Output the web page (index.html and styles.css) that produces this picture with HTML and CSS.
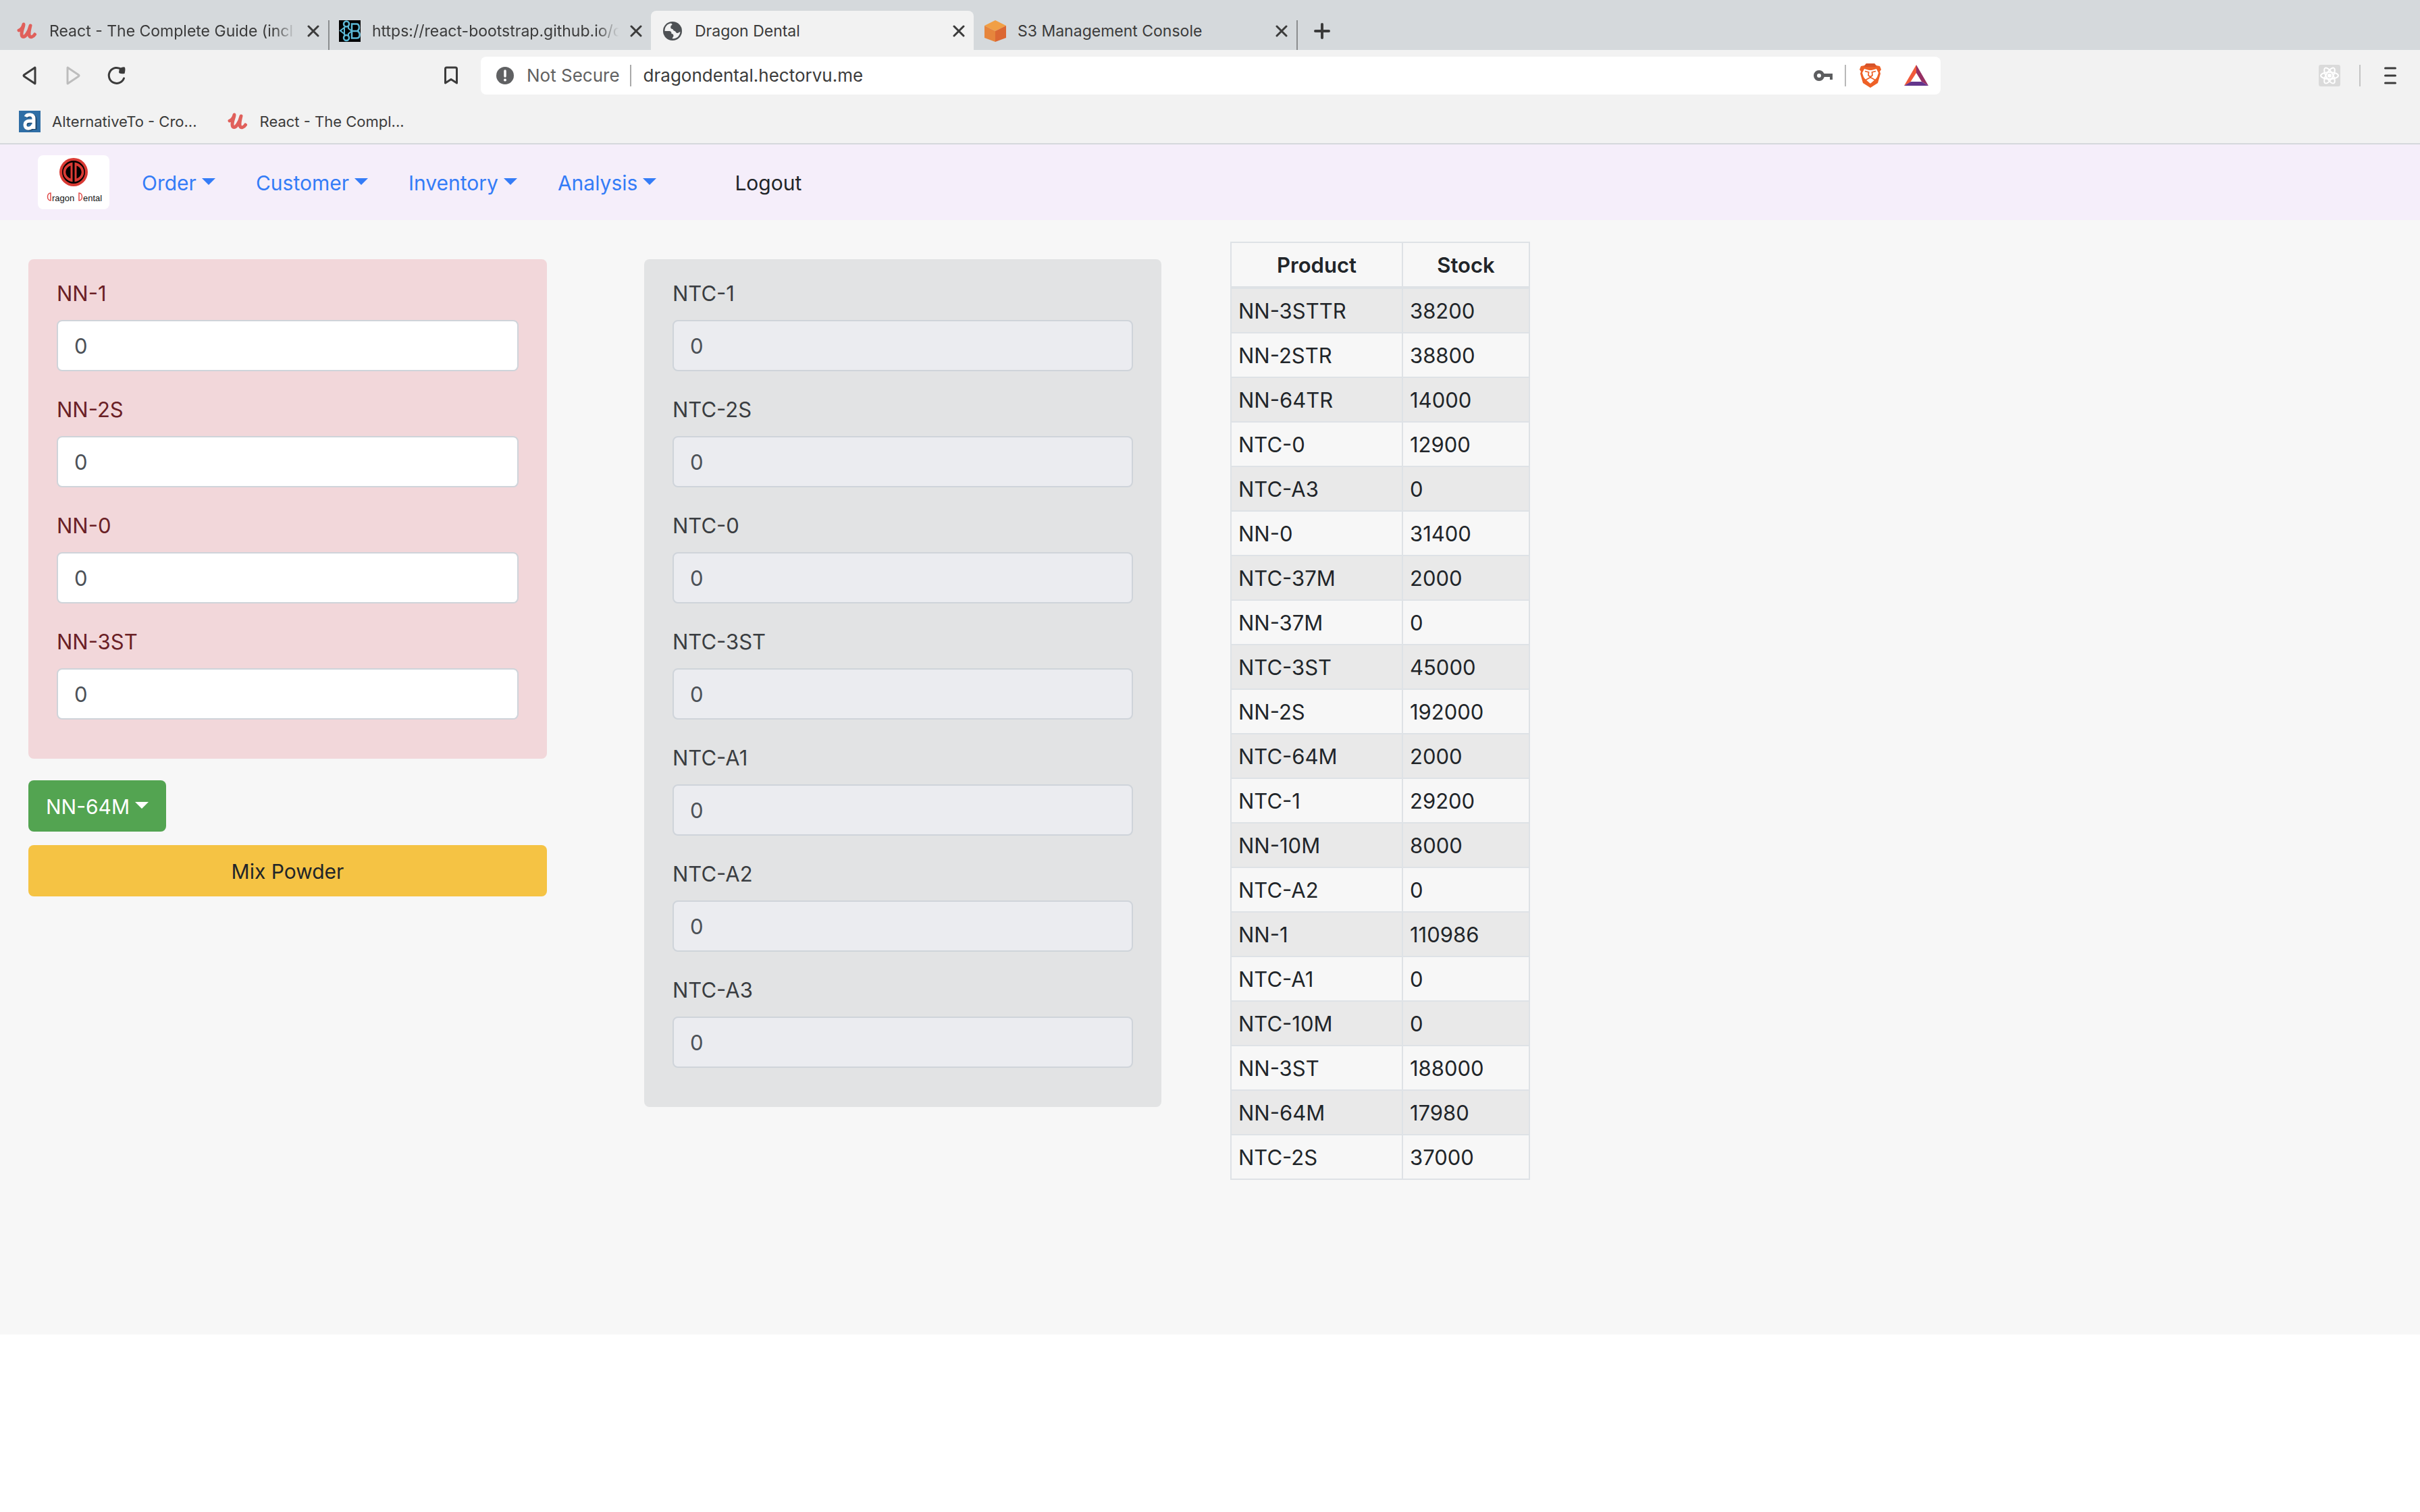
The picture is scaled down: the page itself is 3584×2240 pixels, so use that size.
FILE: index.html
```html
<!DOCTYPE html>
<html lang="en">
<head>
<meta charset="utf-8">
<title>Dragon Dental</title>
<link rel="stylesheet" href="styles.css">
</head>
<body>
<svg class="sprite" aria-hidden="true">
  <symbol id="i-close" viewBox="0 0 18 18"><path d="M2 2l14 14M16 2L2 16" fill="none" stroke="currentColor" stroke-width="3" stroke-linecap="round"/></symbol>
  <symbol id="i-udemy" viewBox="0 0 32 32"><path d="M4 15c3-1 6-5 7-9 1 1-3 8-3 14s4 6 8 0c2-3 4-8 5-12-1 4-3 12-1.500 15 1.500 3 5.500 2 8-2" fill="none" stroke="#e0605b" stroke-width="5" stroke-linecap="round" stroke-linejoin="round"/></symbol>
</svg>

<header class="browser">
  <div class="tabs">
    <div class="tab tab-split">
      <svg class="icon"><use href="#i-udemy"/></svg>
      <span class="tab-title fade">React - The Complete Guide (incl H</span>
      <button class="close" aria-label="Close tab"><svg><use href="#i-close"/></svg></button>
    </div>
    <div class="tab">
      <svg class="icon" viewBox="0 0 32 32"><rect width="32" height="32" fill="#020203"/><g fill="none" stroke="#5cb9d6" stroke-width="2.500"><path d="M19 5.500v21h7c6 0 6-9 1-10.500 4-1.500 4-10.500-1-10.500zM19 16h8"/><circle cx="11" cy="5.500" r="4"/><circle cx="11" cy="26" r="4"/><path d="M9 10L2 15.500 9 21M8 10v12M14 8v4l5 4-5 4v4" stroke-width="2"/></g></svg>
      <span class="tab-title fade">https://react-bootstrap.github.io/c</span>
      <button class="close" aria-label="Close tab"><svg><use href="#i-close"/></svg></button>
    </div>
    <div class="tab tab-active">
      <svg class="icon" viewBox="0 0 32 32"><circle cx="16" cy="16" r="14" fill="#4e5154"/><path d="M14 4.500c-6 1-9.500 5-9.500 11.500h6c3 0 4 1 4 4 2 0 3 1 3 3.500l-2 3.500c5 1 11-2 12-10l-2 1c-2 2-4 1-5-1s-4-1-4-4c-2 0-4-1-3-4 0-2 2-1 2-3z" fill="#f2f2f2"/></svg>
      <span class="tab-title">Dragon Dental</span>
      <button class="close" aria-label="Close tab"><svg><use href="#i-close"/></svg></button>
    </div>
    <div class="tab tab-split">
      <svg class="icon" viewBox="0 0 32 32"><path d="M16 0l16 8-16 8L0 8z" fill="#f19f45"/><path d="M0 8l16 8v16L0 26z" fill="#e6853c"/><path d="M32 8l-16 8v16l16-6z" fill="#db6733"/></svg>
      <span class="tab-title">S3 Management Console</span>
      <button class="close" aria-label="Close tab"><svg><use href="#i-close"/></svg></button>
    </div>
    <button class="new-tab" aria-label="New tab"><svg viewBox="0 0 24 24"><path d="M12 2v20M2 12h20" stroke="currentColor" stroke-width="4" stroke-linecap="round"/></svg></button>
  </div>

  <div class="toolbar">
    <div class="history">
      <button aria-label="Back"><svg viewBox="0 0 32 32"><path d="M24 4.500v23q0 .8-.8 0L7.500 17q-1-1 0-2L23.200 4.500q.8-.8.8 0z" fill="none" stroke="currentColor" stroke-width="3" stroke-linejoin="round"/></svg></button>
      <button class="off" aria-label="Forward" disabled><svg viewBox="0 0 32 32"><path d="M8 4.500v23q0 .8.800 0L24.500 17q1-1 0-2L8.800 4.500q-.8-.8-.8 0z" fill="none" stroke="currentColor" stroke-width="3" stroke-linejoin="round"/></svg></button>
      <button aria-label="Reload"><svg viewBox="0 0 32 32"><path d="M24 7A11.500 11.500 0 1 0 27.500 20" fill="none" stroke="currentColor" stroke-width="3" stroke-linecap="round"/><path d="M21 5q7-3 8-1 1 3-.5 9-8 1-8.500-2z" fill="currentColor"/></svg></button>
    </div>
    <button class="bookmark" aria-label="Bookmark this page"><svg viewBox="0 0 32 32"><path d="M7.500 6q0-2 2-2h13q2 0 2 2v21l-8.500-5.500L7.500 27z" fill="none" stroke="currentColor" stroke-width="3" stroke-linejoin="round"/></svg></button>
    <div class="address">
      <svg class="icon" viewBox="0 0 32 32"><circle cx="16" cy="16" r="13" fill="#606163"/><path d="M16 9v8" stroke="#fff" stroke-width="3.500" stroke-linecap="round"/><circle cx="16" cy="22.500" r="2" fill="#fff"/></svg>
      <span class="insecure">Not Secure</span>
      <input class="url" aria-label="Address" value="dragondental.hectorvu.me">
      <svg class="icon" viewBox="0 0 32 32"><circle cx="10" cy="16" r="5.500" fill="none" stroke="#5c5d5f" stroke-width="5"/><path d="M15 13h15v9h-4v-4H15z" fill="#5c5d5f"/></svg>
      <button class="shield" aria-label="Brave Shields"><svg viewBox="0 0 32 36"><path d="M10 0h12l3 3 5 1 2 5-2 3 1 3-4 14-11 7-11-7L1 15l1-3-2-3 2-5 5-1z" fill="#ee6127"/><path d="M10 0h12l3 5H7z" fill="#d5532a"/><path d="M7 8l7 2h4l7-2 3 6-2 6-3 5-7 5-7-5-3-5-2-6z" fill="#fff"/><path d="M8 11.500l5.500 1.500-.500 4.500 3 2.500 3-2.500-.5-4.500 5.500-1.500M9 24.500l7-4 7 4" fill="none" stroke="#ee6127" stroke-width="1.800"/><path d="M6 21l5 4.500 5 4.500 5-4.500 5-4.500-2 8-8 4-8-4z" fill="#ee6127"/><path d="M12 25l4-2 4 2-4 3z" fill="#fff"/></svg></button>
      <button class="rewards" aria-label="Brave Rewards"><svg viewBox="0 0 36 32"><path d="M18 0v12L9 26l-9 5z" fill="#f15a3a"/><path d="M18 0l18 31-10-6-8-13z" fill="#962f63"/><path d="M0 31l10-6h16l10 6z" fill="#64358c"/></svg></button>
    </div>
    <div class="extras">
      <button aria-label="React Developer Tools"><svg viewBox="0 0 32 32"><rect width="32" height="32" rx="3" fill="#dadada"/><g fill="none" stroke="#fff" stroke-width="2"><ellipse cx="16" cy="16" rx="13" ry="5"/><ellipse cx="16" cy="16" rx="13" ry="5" transform="rotate(60 16 16)"/><ellipse cx="16" cy="16" rx="13" ry="5" transform="rotate(120 16 16)"/></g><circle cx="16" cy="16" r="3" fill="#fff"/></svg></button>
      <button class="menu" aria-label="Menu"><svg viewBox="0 0 32 32"><path d="M8.500 5h15M8.500 16h15M8.500 27h15" stroke="currentColor" stroke-width="3" stroke-linecap="round"/></svg></button>
    </div>
  </div>

  <nav class="bookmarks" aria-label="Bookmarks">
    <a href="#"><svg class="icon" viewBox="0 0 32 32"><rect width="32" height="32" fill="#2f6ea5"/><path d="M10 9c2-4 13-5 13 3v15M22 15c-7 0-13 0-13 6 0 7 10 7 13 0" fill="none" stroke="#1d4468" stroke-width="5" transform="translate(1 1)"/><path d="M10 9c2-4 12-5 12 3v15M21 15c-7 0-12 0-12 6 0 7 9 7 12 0" fill="none" stroke="#fff" stroke-width="5"/></svg>AlternativeTo - Cro...</a>
    <a href="#"><svg class="icon"><use href="#i-udemy"/></svg>React - The Compl...</a>
  </nav>
</header>

<div class="app">
  <nav class="navbar" aria-label="Main">
    <a class="brand" href="#" aria-label="Dragon Dental">
      <svg viewBox="0 0 106 80">
        <circle cx="53" cy="25" r="21" fill="#d93a34"/><circle cx="53" cy="25" r="17" fill="#000"/>
        <path d="M51.500 10.500v29C33 36 33 14 51.500 10.500zM54.500 10.500v29C73 36 73 14 54.500 10.500z" fill="#d93a34"/>
        <path d="M48.500 15.500v19C39 31 39 19 48.500 15.500zM57.500 15.500v19C67 31 67 19 57.500 15.500z" fill="#000"/>
        <path d="M19 56v11c-6 0-6-11 0-11zM61 56v11c6 0 6-11 0-11z" fill="none" stroke="#e04a48" stroke-width="1.500"/>
        <text x="21" y="68" class="brand-text">ragon</text><text x="67" y="68" class="brand-text">ental</text>
      </svg>
    </a>
    <button class="nav-link caret">Order</button>
    <button class="nav-link caret">Customer</button>
    <button class="nav-link caret">Inventory</button>
    <button class="nav-link caret">Analysis</button>
    <a class="logout" href="#">Logout</a>
  </nav>

  <main class="content">
    <form class="mix">
      <div class="card card-pink">
        <label for="nn1">NN-1</label><input id="nn1" value="0">
        <label for="nn2s">NN-2S</label><input id="nn2s" value="0">
        <label for="nn0">NN-0</label><input id="nn0" value="0">
        <label for="nn3st">NN-3ST</label><input id="nn3st" value="0">
      </div>
      <button type="button" class="btn btn-green caret">NN-64M</button>
      <button type="button" class="btn btn-yellow">Mix Powder</button>
    </form>

    <div class="mix-ntc">
      <div class="card card-gray">
        <label for="ntc1">NTC-1</label><input id="ntc1" value="0" readonly>
        <label for="ntc2s">NTC-2S</label><input id="ntc2s" value="0" readonly>
        <label for="ntc0">NTC-0</label><input id="ntc0" value="0" readonly>
        <label for="ntc3st">NTC-3ST</label><input id="ntc3st" value="0" readonly>
        <label for="ntca1">NTC-A1</label><input id="ntca1" value="0" readonly>
        <label for="ntca2">NTC-A2</label><input id="ntca2" value="0" readonly>
        <label for="ntca3">NTC-A3</label><input id="ntca3" value="0" readonly>
      </div>
    </div>

    <table class="stock">
      <thead><tr><th>Product</th><th>Stock</th></tr></thead>
      <tbody>
        <tr><td>NN-3STTR</td><td>38200</td></tr>
        <tr><td>NN-2STR</td><td>38800</td></tr>
        <tr><td>NN-64TR</td><td>14000</td></tr>
        <tr><td>NTC-0</td><td>12900</td></tr>
        <tr><td>NTC-A3</td><td>0</td></tr>
        <tr><td>NN-0</td><td>31400</td></tr>
        <tr><td>NTC-37M</td><td>2000</td></tr>
        <tr><td>NN-37M</td><td>0</td></tr>
        <tr><td>NTC-3ST</td><td>45000</td></tr>
        <tr><td>NN-2S</td><td>192000</td></tr>
        <tr><td>NTC-64M</td><td>2000</td></tr>
        <tr><td>NTC-1</td><td>29200</td></tr>
        <tr><td>NN-10M</td><td>8000</td></tr>
        <tr><td>NTC-A2</td><td>0</td></tr>
        <tr><td>NN-1</td><td>110986</td></tr>
        <tr><td>NTC-A1</td><td>0</td></tr>
        <tr><td>NTC-10M</td><td>0</td></tr>
        <tr><td>NN-3ST</td><td>188000</td></tr>
        <tr><td>NN-64M</td><td>17980</td></tr>
        <tr><td>NTC-2S</td><td>37000</td></tr>
      </tbody>
    </table>
  </main>
</div>
</body>
</html>
```
FILE: styles.css
```css
*, *::before, *::after { box-sizing: border-box; }

body {
  margin: 0;
  background: #fff;
  color: #212529;
  font: 31px/48px Inter, "Liberation Sans", sans-serif;
}

button, input { font: inherit; color: inherit; }
button { padding: 0; border: 0; background: none; }
a { color: inherit; text-decoration: none; }
svg { display: block; flex: none; }

.sprite { position: absolute; width: 0; height: 0; }
.icon { width: 32px; height: 32px; }

/* Browser window */
.browser {
  background: #f2f2f2;
  border-bottom: 2px solid #d5d8dc;
  color: #3b3b3b;
  font-size: 23px;
  line-height: 32px;
}

.tabs {
  display: flex;
  align-items: flex-end;
  height: 74px;
  padding-left: 8px;
  background: #d5d9dc;
}

.tab {
  position: relative;
  display: flex;
  align-items: center;
  width: 478px;
  height: 58px;
  padding: 2px 12px 0 16px;
}

.tab-active { background: #f2f2f2; border-radius: 8px 8px 0 0; }

.tab-split::after {
  content: "";
  position: absolute;
  right: -2px;
  bottom: 0;
  width: 2px;
  height: 44px;
  background: #8b8d8f;
}

.tab-title {
  flex: 1;
  min-width: 0;
  margin: 0 4px 0 17px;
  overflow: hidden;
  white-space: nowrap;
}

.fade {
  -webkit-mask-image: linear-gradient(to right, #000 88%, transparent 97%);
  mask-image: linear-gradient(to right, #000 88%, transparent 97%);
}

.close svg { width: 18px; height: 18px; margin: 0 1px; }
.new-tab { margin: 0 26px 16px; }
.new-tab svg { width: 24px; height: 24px; }

.toolbar {
  display: grid;
  grid-template-columns: 652fr 60px 2162fr 710fr;
  align-items: center;
  height: 76px;
}

.toolbar button svg { width: 32px; height: 32px; }

.history { display: flex; gap: 32px; padding-left: 28px; }
.off { color: #bdbdbd; }

.address {
  display: flex;
  align-items: center;
  height: 56px;
  padding: 0 18px 0 20px;
  border-radius: 8px;
  background: #fff;
  font-size: 26px;
}

.insecure {
  margin-left: 16px;
  padding-right: 15px;
  border-right: 2px solid #a9a9a9;
  color: #616161;
}

.url {
  flex: 1;
  min-width: 0;
  height: 32px;
  padding: 0 0 0 18px;
  border: 0;
  background: none;
}

.shield { margin-left: 16px; padding-left: 20px; border-left: 2px solid #b8b8b8; }
.rewards { margin-left: 34px; }
.toolbar .shield svg { height: 36px; margin: -2px 0; }
.toolbar .rewards svg { width: 36px; }

.extras { display: flex; justify-content: flex-end; padding-right: 28px; }
.menu { margin-left: 28px; padding-left: 28px; border-left: 2px solid #c4c4c4; }

.bookmarks { display: flex; gap: 44px; height: 62px; padding: 14px 28px 0; font-size: 22px; }
.bookmarks a { display: flex; gap: 17px; height: 32px; }

/* Application */
.app { padding-bottom: 229px; background: #f7f7f7; }

.navbar {
  display: flex;
  align-items: center;
  height: 112px;
  padding: 2px 0 0 56px;
  background: #f5eefa;
  font-size: 30px;
}

.brand { width: 106px; height: 80px; margin: 0 48px 2px 0; border-radius: 8px; background: #fff; }
.brand-text { font: 13px "Liberation Sans", sans-serif; fill: #111; }
.nav-link { margin-right: 60px; color: #347cf7; }
.logout { margin-left: 56px; }

.caret::after {
  content: "";
  display: inline-block;
  margin-left: 8px;
  vertical-align: 8px;
  border: 10px solid transparent;
  border-top-color: currentColor;
  border-bottom: 0;
}

.content {
  display: grid;
  grid-template-columns: 912fr 868fr 1762fr;
  align-items: start;
  padding: 32px 0 0 42px;
}

.mix { display: flex; flex-direction: column; align-items: flex-start; padding: 26px 144px 0 0; }
.mix-ntc { padding: 26px 102px 0 0; }

.card {
  display: flex;
  flex-direction: column;
  width: 100%;
  padding: 26px 42px;
  border-radius: 8px;
}

.card label { padding-top: 1px; margin-bottom: 15px; }

.card input {
  width: 100%;
  height: 76px;
  margin: 0 0 32px;
  padding: 1px 24px 0;
  border: 2px solid #cfd4da;
  border-radius: 8px;
  background: #fff;
  color: #4c5157;
}

.card-pink { background: #f2d7da; color: #6a2025; }
.card-gray { background: #e2e3e4; color: #3a3d41; }
.card-gray input { background: #ebecf0; }

.btn { height: 76px; padding: 1px 26px 0; border-radius: 8px; font-size: 30px; }
.btn-green { margin: 32px 0 20px; background: #53a451; color: #fff; }
.btn-yellow { width: 100%; background: #f5c344; color: #212529; }

.stock {
  width: 444px;
  border-collapse: separate;
  border-spacing: 0;
  border-top: 2px solid #dee2e6;
  border-left: 2px solid #dee2e6;
  table-layout: fixed;
}

.stock th, .stock td {
  height: 66px;
  padding: 9px 10px 7px;
  border-right: 2px solid #dee2e6;
  border-bottom: 2px solid #dee2e6;
  text-align: left;
}

.stock th { height: 68px; border-bottom-width: 4px; font-weight: 600; text-align: center; }
.stock th:first-child { width: 254px; }
.stock tbody tr:nth-child(odd) { background: #e9e9e9; }
```
